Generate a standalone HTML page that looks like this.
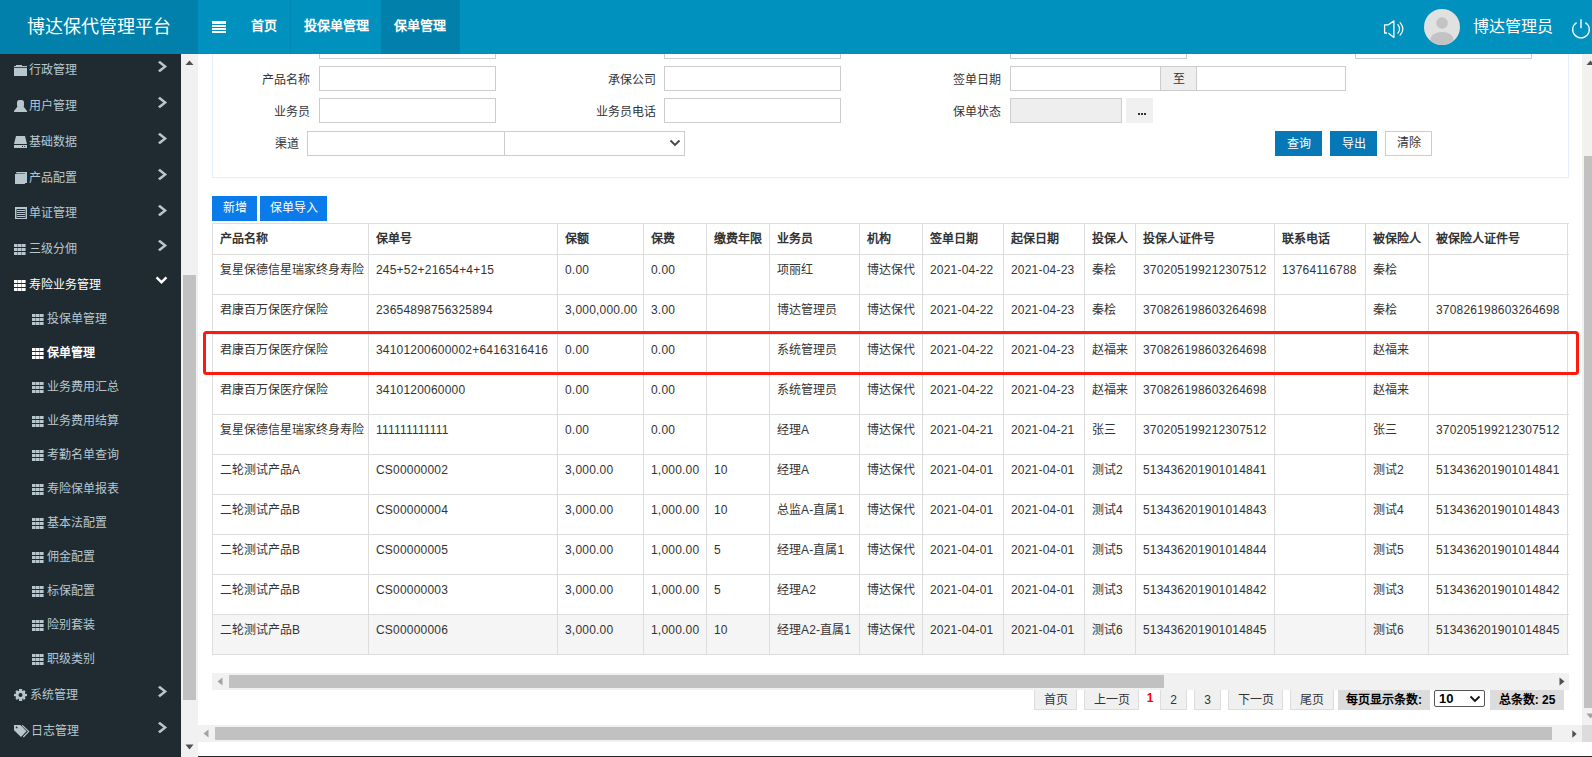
<!DOCTYPE html>
<html lang="zh-CN">
<head>
<meta charset="utf-8">
<style>
*{box-sizing:border-box;margin:0;padding:0}
html,body{width:1592px;height:757px;overflow:hidden;background:#fff}
body{position:relative;font-family:"Liberation Sans",sans-serif;font-size:12px;color:#333}
.a{position:absolute}
/* header */
#hdr{left:0;top:0;width:1592px;height:54px;background:#0091bf}
#logo{left:0;top:0;width:198px;height:54px;background:#0080aa;color:#fff;font-size:18px;line-height:54px;padding-left:27px;white-space:nowrap}
.nav{top:0;height:54px;line-height:52px;color:#fff;font-weight:bold;font-size:13px;white-space:nowrap}
#sb{left:0;top:54px;width:181px;height:703px;background:#1f2b31}
.mi{left:0;height:20px;line-height:20px;color:#b8c7ce;font-size:12px;white-space:nowrap}
.vsb{background:#f1f1f1}
.thumb{background:#c1c1c1}
.lab{text-align:right;height:20px;line-height:20px;color:#333;white-space:nowrap}
.btn{text-align:center;white-space:nowrap;font-size:12px}
.hl{left:212px;width:1357px;height:1px;background:#ddd}
.vl{top:223px;width:1px;height:431px;background:#ddd}
.th{font-weight:bold;height:20px;line-height:20px;white-space:nowrap;color:#333}
.n{letter-spacing:0.2px}
.td{height:20px;line-height:20px;white-space:nowrap;color:#333}
.pg{top:690px;height:20px;line-height:21px;background:#f0f0f0;border:1px solid #ddd;border-top:none;text-align:center;color:#333;white-space:nowrap}
.pgb{top:690px;height:20px;line-height:20px;background:#dcdcdc;text-align:center;color:#000;font-weight:bold;white-space:nowrap}
</style>
</head>
<body>
<!-- main -->
<div class="a" style="left:212px;top:20px;width:1357px;height:158px;border:1px solid #e3f0fc;border-top:none"></div>
<div class="a" style="left:319px;top:34px;width:177px;height:25px;border:1px solid #ccc;background:#fff"></div>
<div class="a" style="left:664px;top:34px;width:177px;height:25px;border:1px solid #ccc;background:#fff"></div>
<div class="a" style="left:1010px;top:34px;width:177px;height:25px;border:1px solid #ccc;background:#fff"></div>
<div class="a" style="left:1355px;top:34px;width:177px;height:25px;border:1px solid #ccc;background:#fff"></div>
<div class="a lab" style="left:110px;top:69.5px;width:200px">产品名称</div>
<div class="a" style="left:319px;top:66px;width:177px;height:25px;border:1px solid #ccc;background:#fff"></div>
<div class="a lab" style="left:456px;top:69.5px;width:200px">承保公司</div>
<div class="a" style="left:664px;top:66px;width:177px;height:25px;border:1px solid #ccc;background:#fff"></div>
<div class="a lab" style="left:801px;top:69.5px;width:200px">签单日期</div>
<div class="a" style="left:1010px;top:66px;width:151px;height:25px;border:1px solid #ccc;background:#fff"></div>
<div class="a" style="left:1160px;top:66px;width:37px;height:25px;border:1px solid #ccc;background:#eee;text-align:center;line-height:25px;color:#333">至</div>
<div class="a" style="left:1196px;top:66px;width:150px;height:25px;border:1px solid #ccc;background:#fff"></div>
<div class="a lab" style="left:110px;top:101.5px;width:200px">业务员</div>
<div class="a" style="left:319px;top:98px;width:177px;height:25px;border:1px solid #ccc;background:#fff"></div>
<div class="a lab" style="left:456px;top:101.5px;width:200px">业务员电话</div>
<div class="a" style="left:664px;top:98px;width:177px;height:25px;border:1px solid #ccc;background:#fff"></div>
<div class="a lab" style="left:801px;top:101.5px;width:200px">保单状态</div>
<div class="a" style="left:1010px;top:98px;width:112px;height:25px;border:1px solid #ccc;background:#eee"></div>
<div class="a" style="left:1126px;top:98px;width:27px;height:25px;background:#f0f0f0"></div><div class="a" style="left:1138px;top:113px;width:1.6px;height:1.8px;background:#333"></div><div class="a" style="left:1141px;top:113px;width:1.6px;height:1.8px;background:#333"></div><div class="a" style="left:1144px;top:113px;width:1.6px;height:1.8px;background:#333"></div>
<div class="a lab" style="left:99px;top:134px;width:200px">渠道</div>
<div class="a" style="left:307px;top:131px;width:198px;height:25px;border:1px solid #ccc;background:#fff"></div>
<div class="a" style="left:504px;top:131px;width:181px;height:25px;border:1px solid #ccc;background:#fff"></div>
<svg class="a" style="left:669px;top:139px" width="12" height="8" viewBox="0 0 12 8"><path d="M1.5 1.5 L6 6 L10.5 1.5" fill="none" stroke="#444" stroke-width="1.8"/></svg>
<div class="a btn" style="left:1275px;top:131px;width:47px;height:25px;line-height:26px;background:#0678b5;color:#fff;">查询</div>
<div class="a btn" style="left:1330px;top:131px;width:47px;height:25px;line-height:26px;background:#0678b5;color:#fff;">导出</div>
<div class="a btn" style="left:1385px;top:131px;width:47px;height:25px;line-height:23px;background:#fff;color:#333;border:1px solid #ccc;">清除</div>
<div class="a btn" style="left:212px;top:196px;width:45px;height:25px;line-height:25px;background:#0a7be8;color:#fff;">新增</div>
<div class="a btn" style="left:260px;top:196px;width:67px;height:25px;line-height:25px;background:#0a7be8;color:#fff;">保单导入</div>
<div class="a" style="left:212px;top:614px;width:1356px;height:40px;background:#f5f5f5"></div>
<div class="a hl" style="top:223px"></div>
<div class="a hl" style="top:254px"></div>
<div class="a hl" style="top:294px"></div>
<div class="a hl" style="top:334px"></div>
<div class="a hl" style="top:374px"></div>
<div class="a hl" style="top:414px"></div>
<div class="a hl" style="top:454px"></div>
<div class="a hl" style="top:494px"></div>
<div class="a hl" style="top:534px"></div>
<div class="a hl" style="top:574px"></div>
<div class="a hl" style="top:614px"></div>
<div class="a hl" style="top:654px"></div>
<div class="a vl" style="left:212px"></div>
<div class="a vl" style="left:368px"></div>
<div class="a vl" style="left:557px"></div>
<div class="a vl" style="left:643px"></div>
<div class="a vl" style="left:706px"></div>
<div class="a vl" style="left:769px"></div>
<div class="a vl" style="left:859px"></div>
<div class="a vl" style="left:922px"></div>
<div class="a vl" style="left:1003px"></div>
<div class="a vl" style="left:1084px"></div>
<div class="a vl" style="left:1135px"></div>
<div class="a vl" style="left:1274px"></div>
<div class="a vl" style="left:1365px"></div>
<div class="a vl" style="left:1428px"></div>
<div class="a vl" style="left:1567px"></div>
<div class="a th" style="left:220px;top:228.5px">产品名称</div>
<div class="a th" style="left:376px;top:228.5px">保单号</div>
<div class="a th" style="left:565px;top:228.5px">保额</div>
<div class="a th" style="left:651px;top:228.5px">保费</div>
<div class="a th" style="left:714px;top:228.5px">缴费年限</div>
<div class="a th" style="left:777px;top:228.5px">业务员</div>
<div class="a th" style="left:867px;top:228.5px">机构</div>
<div class="a th" style="left:930px;top:228.5px">签单日期</div>
<div class="a th" style="left:1011px;top:228.5px">起保日期</div>
<div class="a th" style="left:1092px;top:228.5px">投保人</div>
<div class="a th" style="left:1143px;top:228.5px">投保人证件号</div>
<div class="a th" style="left:1282px;top:228.5px">联系电话</div>
<div class="a th" style="left:1373px;top:228.5px">被保险人</div>
<div class="a th" style="left:1436px;top:228.5px">被保险人证件号</div>
<div class="a td" style="left:220px;top:259.5px">复星保德信星瑞家终身寿险</div>
<div class="a td" style="left:376px;top:259.5px"><span class="n">245+52+21654+4+15</span></div>
<div class="a td" style="left:565px;top:259.5px"><span class="n">0.00</span></div>
<div class="a td" style="left:651px;top:259.5px"><span class="n">0.00</span></div>
<div class="a td" style="left:777px;top:259.5px">项丽红</div>
<div class="a td" style="left:867px;top:259.5px">博达保代</div>
<div class="a td" style="left:930px;top:259.5px"><span class="n">2021-04-22</span></div>
<div class="a td" style="left:1011px;top:259.5px"><span class="n">2021-04-23</span></div>
<div class="a td" style="left:1092px;top:259.5px">秦桧</div>
<div class="a td" style="left:1143px;top:259.5px"><span class="n">370205199212307512</span></div>
<div class="a td" style="left:1282px;top:259.5px"><span class="n">13764116788</span></div>
<div class="a td" style="left:1373px;top:259.5px">秦桧</div>
<div class="a td" style="left:220px;top:299.5px">君康百万保医疗保险</div>
<div class="a td" style="left:376px;top:299.5px"><span class="n">23654898756325894</span></div>
<div class="a td" style="left:565px;top:299.5px"><span class="n">3,000,000.00</span></div>
<div class="a td" style="left:651px;top:299.5px"><span class="n">3.00</span></div>
<div class="a td" style="left:777px;top:299.5px">博达管理员</div>
<div class="a td" style="left:867px;top:299.5px">博达保代</div>
<div class="a td" style="left:930px;top:299.5px"><span class="n">2021-04-22</span></div>
<div class="a td" style="left:1011px;top:299.5px"><span class="n">2021-04-23</span></div>
<div class="a td" style="left:1092px;top:299.5px">秦桧</div>
<div class="a td" style="left:1143px;top:299.5px"><span class="n">370826198603264698</span></div>
<div class="a td" style="left:1373px;top:299.5px">秦桧</div>
<div class="a td" style="left:1436px;top:299.5px"><span class="n">370826198603264698</span></div>
<div class="a td" style="left:220px;top:339.5px">君康百万保医疗保险</div>
<div class="a td" style="left:376px;top:339.5px"><span class="n">34101200600002+6416316416</span></div>
<div class="a td" style="left:565px;top:339.5px"><span class="n">0.00</span></div>
<div class="a td" style="left:651px;top:339.5px"><span class="n">0.00</span></div>
<div class="a td" style="left:777px;top:339.5px">系统管理员</div>
<div class="a td" style="left:867px;top:339.5px">博达保代</div>
<div class="a td" style="left:930px;top:339.5px"><span class="n">2021-04-22</span></div>
<div class="a td" style="left:1011px;top:339.5px"><span class="n">2021-04-23</span></div>
<div class="a td" style="left:1092px;top:339.5px">赵福来</div>
<div class="a td" style="left:1143px;top:339.5px"><span class="n">370826198603264698</span></div>
<div class="a td" style="left:1373px;top:339.5px">赵福来</div>
<div class="a td" style="left:220px;top:379.5px">君康百万保医疗保险</div>
<div class="a td" style="left:376px;top:379.5px"><span class="n">3410120060000</span></div>
<div class="a td" style="left:565px;top:379.5px"><span class="n">0.00</span></div>
<div class="a td" style="left:651px;top:379.5px"><span class="n">0.00</span></div>
<div class="a td" style="left:777px;top:379.5px">系统管理员</div>
<div class="a td" style="left:867px;top:379.5px">博达保代</div>
<div class="a td" style="left:930px;top:379.5px"><span class="n">2021-04-22</span></div>
<div class="a td" style="left:1011px;top:379.5px"><span class="n">2021-04-23</span></div>
<div class="a td" style="left:1092px;top:379.5px">赵福来</div>
<div class="a td" style="left:1143px;top:379.5px"><span class="n">370826198603264698</span></div>
<div class="a td" style="left:1373px;top:379.5px">赵福来</div>
<div class="a td" style="left:220px;top:419.5px">复星保德信星瑞家终身寿险</div>
<div class="a td" style="left:376px;top:419.5px"><span class="n">111111111111</span></div>
<div class="a td" style="left:565px;top:419.5px"><span class="n">0.00</span></div>
<div class="a td" style="left:651px;top:419.5px"><span class="n">0.00</span></div>
<div class="a td" style="left:777px;top:419.5px">经理<span class="n">A</span></div>
<div class="a td" style="left:867px;top:419.5px">博达保代</div>
<div class="a td" style="left:930px;top:419.5px"><span class="n">2021-04-21</span></div>
<div class="a td" style="left:1011px;top:419.5px"><span class="n">2021-04-21</span></div>
<div class="a td" style="left:1092px;top:419.5px">张三</div>
<div class="a td" style="left:1143px;top:419.5px"><span class="n">370205199212307512</span></div>
<div class="a td" style="left:1373px;top:419.5px">张三</div>
<div class="a td" style="left:1436px;top:419.5px"><span class="n">370205199212307512</span></div>
<div class="a td" style="left:220px;top:459.5px">二轮测试产品<span class="n">A</span></div>
<div class="a td" style="left:376px;top:459.5px"><span class="n">CS00000002</span></div>
<div class="a td" style="left:565px;top:459.5px"><span class="n">3,000.00</span></div>
<div class="a td" style="left:651px;top:459.5px"><span class="n">1,000.00</span></div>
<div class="a td" style="left:714px;top:459.5px"><span class="n">10</span></div>
<div class="a td" style="left:777px;top:459.5px">经理<span class="n">A</span></div>
<div class="a td" style="left:867px;top:459.5px">博达保代</div>
<div class="a td" style="left:930px;top:459.5px"><span class="n">2021-04-01</span></div>
<div class="a td" style="left:1011px;top:459.5px"><span class="n">2021-04-01</span></div>
<div class="a td" style="left:1092px;top:459.5px">测试<span class="n">2</span></div>
<div class="a td" style="left:1143px;top:459.5px"><span class="n">513436201901014841</span></div>
<div class="a td" style="left:1373px;top:459.5px">测试<span class="n">2</span></div>
<div class="a td" style="left:1436px;top:459.5px"><span class="n">513436201901014841</span></div>
<div class="a td" style="left:220px;top:499.5px">二轮测试产品<span class="n">B</span></div>
<div class="a td" style="left:376px;top:499.5px"><span class="n">CS00000004</span></div>
<div class="a td" style="left:565px;top:499.5px"><span class="n">3,000.00</span></div>
<div class="a td" style="left:651px;top:499.5px"><span class="n">1,000.00</span></div>
<div class="a td" style="left:714px;top:499.5px"><span class="n">10</span></div>
<div class="a td" style="left:777px;top:499.5px">总监<span class="n">A-</span>直属<span class="n">1</span></div>
<div class="a td" style="left:867px;top:499.5px">博达保代</div>
<div class="a td" style="left:930px;top:499.5px"><span class="n">2021-04-01</span></div>
<div class="a td" style="left:1011px;top:499.5px"><span class="n">2021-04-01</span></div>
<div class="a td" style="left:1092px;top:499.5px">测试<span class="n">4</span></div>
<div class="a td" style="left:1143px;top:499.5px"><span class="n">513436201901014843</span></div>
<div class="a td" style="left:1373px;top:499.5px">测试<span class="n">4</span></div>
<div class="a td" style="left:1436px;top:499.5px"><span class="n">513436201901014843</span></div>
<div class="a td" style="left:220px;top:539.5px">二轮测试产品<span class="n">B</span></div>
<div class="a td" style="left:376px;top:539.5px"><span class="n">CS00000005</span></div>
<div class="a td" style="left:565px;top:539.5px"><span class="n">3,000.00</span></div>
<div class="a td" style="left:651px;top:539.5px"><span class="n">1,000.00</span></div>
<div class="a td" style="left:714px;top:539.5px"><span class="n">5</span></div>
<div class="a td" style="left:777px;top:539.5px">经理<span class="n">A-</span>直属<span class="n">1</span></div>
<div class="a td" style="left:867px;top:539.5px">博达保代</div>
<div class="a td" style="left:930px;top:539.5px"><span class="n">2021-04-01</span></div>
<div class="a td" style="left:1011px;top:539.5px"><span class="n">2021-04-01</span></div>
<div class="a td" style="left:1092px;top:539.5px">测试<span class="n">5</span></div>
<div class="a td" style="left:1143px;top:539.5px"><span class="n">513436201901014844</span></div>
<div class="a td" style="left:1373px;top:539.5px">测试<span class="n">5</span></div>
<div class="a td" style="left:1436px;top:539.5px"><span class="n">513436201901014844</span></div>
<div class="a td" style="left:220px;top:579.5px">二轮测试产品<span class="n">B</span></div>
<div class="a td" style="left:376px;top:579.5px"><span class="n">CS00000003</span></div>
<div class="a td" style="left:565px;top:579.5px"><span class="n">3,000.00</span></div>
<div class="a td" style="left:651px;top:579.5px"><span class="n">1,000.00</span></div>
<div class="a td" style="left:714px;top:579.5px"><span class="n">5</span></div>
<div class="a td" style="left:777px;top:579.5px">经理<span class="n">A2</span></div>
<div class="a td" style="left:867px;top:579.5px">博达保代</div>
<div class="a td" style="left:930px;top:579.5px"><span class="n">2021-04-01</span></div>
<div class="a td" style="left:1011px;top:579.5px"><span class="n">2021-04-01</span></div>
<div class="a td" style="left:1092px;top:579.5px">测试<span class="n">3</span></div>
<div class="a td" style="left:1143px;top:579.5px"><span class="n">513436201901014842</span></div>
<div class="a td" style="left:1373px;top:579.5px">测试<span class="n">3</span></div>
<div class="a td" style="left:1436px;top:579.5px"><span class="n">513436201901014842</span></div>
<div class="a td" style="left:220px;top:619.5px">二轮测试产品<span class="n">B</span></div>
<div class="a td" style="left:376px;top:619.5px"><span class="n">CS00000006</span></div>
<div class="a td" style="left:565px;top:619.5px"><span class="n">3,000.00</span></div>
<div class="a td" style="left:651px;top:619.5px"><span class="n">1,000.00</span></div>
<div class="a td" style="left:714px;top:619.5px"><span class="n">10</span></div>
<div class="a td" style="left:777px;top:619.5px">经理<span class="n">A2-</span>直属<span class="n">1</span></div>
<div class="a td" style="left:867px;top:619.5px">博达保代</div>
<div class="a td" style="left:930px;top:619.5px"><span class="n">2021-04-01</span></div>
<div class="a td" style="left:1011px;top:619.5px"><span class="n">2021-04-01</span></div>
<div class="a td" style="left:1092px;top:619.5px">测试<span class="n">6</span></div>
<div class="a td" style="left:1143px;top:619.5px"><span class="n">513436201901014845</span></div>
<div class="a td" style="left:1373px;top:619.5px">测试<span class="n">6</span></div>
<div class="a td" style="left:1436px;top:619.5px"><span class="n">513436201901014845</span></div>
<div class="a" style="left:203px;top:331px;width:1376px;height:44px;border:3px solid #ff1a0f;border-radius:3.5px"></div>
<div class="a vsb" style="left:212px;top:673px;width:1357px;height:17px"></div>
<div class="a thumb" style="left:229px;top:675px;width:935px;height:13px"></div>
<svg class="a" style="left:217px;top:677px" width="6" height="9" viewBox="0 0 6 9"><path d="M5.5 0.5 L0.5 4.5 L5.5 8.5 Z" fill="#a3a3a3"/></svg>
<svg class="a" style="left:1559px;top:677px" width="6" height="9" viewBox="0 0 6 9"><path d="M0.5 0.5 L5.5 4.5 L0.5 8.5 Z" fill="#505050"/></svg>
<div class="a pg" style="left:1034px;width:43px;">首页</div>
<div class="a pg" style="left:1084px;width:55px;">上一页</div>
<div class="a" style="left:1144px;top:688.5px;width:12px;height:19px;line-height:19px;text-align:center;color:#f00;font-weight:bold;font-size:12px">1</div>
<div class="a pg" style="left:1160px;width:27px;">2</div>
<div class="a pg" style="left:1194px;width:27px;">3</div>
<div class="a pg" style="left:1228px;width:55px;">下一页</div>
<div class="a pg" style="left:1290px;width:44px;">尾页</div>
<div class="a pgb" style="left:1338px;width:92px">每页显示条数:</div>
<div class="a" style="left:1434px;top:690px;width:51px;height:17px;border:1px solid #555;border-radius:2px;background:#fff;line-height:15px;padding-left:4px;font-size:13px;color:#000;font-weight:bold">10</div>
<svg class="a" style="left:1469px;top:695px" width="12" height="8" viewBox="0 0 12 8"><path d="M1.5 1.5 L6 6 L10.5 1.5" fill="none" stroke="#111" stroke-width="1.8"/></svg>
<div class="a pgb" style="left:1490px;width:74px">总条数: 25</div>
<div class="a vsb" style="left:1582px;top:54px;width:17px;height:671px"></div>
<div class="a thumb" style="left:1584px;top:156px;width:13px;height:552px"></div>
<svg class="a" style="left:1586px;top:60px" width="9" height="6" viewBox="0 0 9 6"><path d="M0.5 5 L4.5 0.6 L8.5 5 Z" fill="#505050"/></svg>
<svg class="a" style="left:1586px;top:713px" width="9" height="6" viewBox="0 0 9 6"><path d="M0.5 0.5 L4.5 5.5 L8.5 0.5 Z" fill="#a3a3a3"/></svg>
<div class="a vsb" style="left:198px;top:725px;width:1384px;height:17px"></div>
<div class="a thumb" style="left:215px;top:727px;width:1337px;height:13px"></div>
<svg class="a" style="left:203px;top:729px" width="6" height="9" viewBox="0 0 6 9"><path d="M5.5 0.5 L0.5 4.5 L5.5 8.5 Z" fill="#a3a3a3"/></svg>
<svg class="a" style="left:1571.5px;top:729.5px" width="6" height="9" viewBox="0 0 6 9"><path d="M0.3 0.3 L4.7 4 L0.3 7.7 Z" fill="#505050"/></svg>
<div class="a" style="left:1582px;top:725px;width:10px;height:17px;background:#dcdcdc"></div>
<div class="a" style="left:0;top:756px;width:1592px;height:1px;background:#222"></div>

<div id="hdr" class="a"></div>
<div id="logo" class="a">博达保代管理平台</div>
<div class="a" style="left:290px;top:0;width:1px;height:54px;background:#0087b3"></div>
<div class="a" style="left:381px;top:0;width:79px;height:54px;background:#0080aa"></div>
<!-- hamburger -->
<div class="a" style="left:211.5px;top:21px;width:14px;height:2.5px;background:#fff"></div>
<div class="a" style="left:211.5px;top:24.5px;width:14px;height:2.5px;background:#fff"></div>
<div class="a" style="left:211.5px;top:28px;width:14px;height:2.3px;background:#fff"></div>
<div class="a" style="left:211.5px;top:31px;width:14px;height:2.3px;background:#fff"></div>
<div class="a nav" style="left:251px">首页</div>
<div class="a nav" style="left:304px">投保单管理</div>
<div class="a nav" style="left:394px">保单管理</div>

<div id="sb" class="a"></div>
<div class="a vsb" style="left:181px;top:54px;width:17px;height:703px"></div>
<div class="a thumb" style="left:183px;top:275px;width:13px;height:425px"></div>

<!-- sidebar menu -->
<svg class="a" style="left:14px;top:65px" width="13" height="11" viewBox="0 0 13 11"><rect x="2" y="0" width="6" height="1" fill="#b8c7ce"/><rect x="0" y="1" width="13" height="1.2" fill="#b8c7ce"/><rect x="0" y="3" width="13" height="8" fill="#b8c7ce"/></svg>
<div class="a mi" style="left:29px;top:59.5px">行政管理</div>
<svg class="a" style="left:158px;top:60.0px" width="10" height="13" viewBox="0 0 10 13"><path d="M0 2.4 L1.9 0.7 L9.1 6.5 L1.9 12.3 L0 10.6 L5.2 6.5 Z" fill="#b8c7ce"/></svg>
<svg class="a" style="left:14px;top:100px" width="13" height="12" viewBox="0 0 13 12"><rect x="3" y="0" width="7" height="7.5" rx="2.5" fill="#b8c7ce"/><path d="M3.5 6.5 L9.5 6.5 L13 11 L13 12 L0 12 L0 11 Z" fill="#b8c7ce"/></svg>
<div class="a mi" style="left:29px;top:95.5px">用户管理</div>
<svg class="a" style="left:158px;top:96.0px" width="10" height="13" viewBox="0 0 10 13"><path d="M0 2.4 L1.9 0.7 L9.1 6.5 L1.9 12.3 L0 10.6 L5.2 6.5 Z" fill="#b8c7ce"/></svg>
<svg class="a" style="left:14px;top:136px" width="13" height="12" viewBox="0 0 13 12"><path d="M2 0 L11 0 L13 8 L0 8 Z" fill="#b8c7ce"/><rect x="0" y="9" width="13" height="3" fill="#b8c7ce"/><rect x="8" y="10" width="1" height="1" fill="#1f2b31"/><rect x="10.2" y="10" width="1" height="1" fill="#1f2b31"/></svg>
<div class="a mi" style="left:29px;top:131.5px">基础数据</div>
<svg class="a" style="left:158px;top:132.0px" width="10" height="13" viewBox="0 0 10 13"><path d="M0 2.4 L1.9 0.7 L9.1 6.5 L1.9 12.3 L0 10.6 L5.2 6.5 Z" fill="#b8c7ce"/></svg>
<svg class="a" style="left:15px;top:172px" width="12" height="12" viewBox="0 0 12 12"><path d="M1 0 L12 0 L12 11 L10 11 L10 1.5 L1.5 1.5 Z" fill="#b8c7ce"/><rect x="0" y="2" width="10" height="10" fill="#b8c7ce"/></svg>
<div class="a mi" style="left:29px;top:167.5px">产品配置</div>
<svg class="a" style="left:158px;top:168.0px" width="10" height="13" viewBox="0 0 10 13"><path d="M0 2.4 L1.9 0.7 L9.1 6.5 L1.9 12.3 L0 10.6 L5.2 6.5 Z" fill="#b8c7ce"/></svg>
<svg class="a" style="left:15px;top:207px" width="12" height="12" viewBox="0 0 12 12"><path d="M0 0 H12 V12 H0 Z M1.5 2 V11 H10.5 V2 Z" fill="#b8c7ce" fill-rule="evenodd"/><rect x="2" y="3" width="8" height="1" fill="#b8c7ce"/><rect x="2" y="5" width="8" height="1" fill="#b8c7ce"/><rect x="2" y="7" width="8" height="1" fill="#b8c7ce"/><rect x="2" y="9" width="8" height="1" fill="#b8c7ce"/></svg>
<div class="a mi" style="left:29px;top:203px">单证管理</div>
<svg class="a" style="left:158px;top:203.5px" width="10" height="13" viewBox="0 0 10 13"><path d="M0 2.4 L1.9 0.7 L9.1 6.5 L1.9 12.3 L0 10.6 L5.2 6.5 Z" fill="#b8c7ce"/></svg>
<svg class="a" style="left:14px;top:244.0px" width="12" height="11" viewBox="0 0 12 11"><rect x="0" y="0" width="3.6" height="3" fill="#b8c7ce"/><rect x="4" y="0" width="3.6" height="3" fill="#b8c7ce"/><rect x="8" y="0" width="3.6" height="3" fill="#b8c7ce"/><rect x="0" y="4" width="3.6" height="3" fill="#b8c7ce"/><rect x="4" y="4" width="3.6" height="3" fill="#b8c7ce"/><rect x="8" y="4" width="3.6" height="3" fill="#b8c7ce"/><rect x="0" y="8" width="3.6" height="3" fill="#b8c7ce"/><rect x="4" y="8" width="3.6" height="3" fill="#b8c7ce"/><rect x="8" y="8" width="3.6" height="3" fill="#b8c7ce"/></svg>
<div class="a mi" style="left:29px;top:238.5px">三级分佣</div>
<svg class="a" style="left:158px;top:239.0px" width="10" height="13" viewBox="0 0 10 13"><path d="M0 2.4 L1.9 0.7 L9.1 6.5 L1.9 12.3 L0 10.6 L5.2 6.5 Z" fill="#b8c7ce"/></svg>
<svg class="a" style="left:14px;top:280.0px" width="12" height="11" viewBox="0 0 12 11"><rect x="0" y="0" width="3.6" height="3" fill="#fff"/><rect x="4" y="0" width="3.6" height="3" fill="#fff"/><rect x="8" y="0" width="3.6" height="3" fill="#fff"/><rect x="0" y="4" width="3.6" height="3" fill="#fff"/><rect x="4" y="4" width="3.6" height="3" fill="#fff"/><rect x="8" y="4" width="3.6" height="3" fill="#fff"/><rect x="0" y="8" width="3.6" height="3" fill="#fff"/><rect x="4" y="8" width="3.6" height="3" fill="#fff"/><rect x="8" y="8" width="3.6" height="3" fill="#fff"/></svg>
<div class="a mi" style="left:29px;top:274.5px;color:#fff">寿险业务管理</div>
<svg class="a" style="left:155px;top:275.5px" width="13" height="9" viewBox="0 0 13 9"><path d="M0.7 2.3 L2.4 0.6 L6.5 4.6 L10.6 0.6 L12.3 2.3 L6.5 8.1 Z" fill="#fff"/></svg>
<svg class="a" style="left:32px;top:314.0px" width="12" height="11" viewBox="0 0 12 11"><rect x="0" y="0" width="3.6" height="3" fill="#b8c7ce"/><rect x="4" y="0" width="3.6" height="3" fill="#b8c7ce"/><rect x="8" y="0" width="3.6" height="3" fill="#b8c7ce"/><rect x="0" y="4" width="3.6" height="3" fill="#b8c7ce"/><rect x="4" y="4" width="3.6" height="3" fill="#b8c7ce"/><rect x="8" y="4" width="3.6" height="3" fill="#b8c7ce"/><rect x="0" y="8" width="3.6" height="3" fill="#b8c7ce"/><rect x="4" y="8" width="3.6" height="3" fill="#b8c7ce"/><rect x="8" y="8" width="3.6" height="3" fill="#b8c7ce"/></svg>
<div class="a mi" style="left:47px;top:308.5px;color:#b8c7ce">投保单管理</div>
<svg class="a" style="left:32px;top:348.0px" width="12" height="11" viewBox="0 0 12 11"><rect x="0" y="0" width="3.6" height="3" fill="#fff"/><rect x="4" y="0" width="3.6" height="3" fill="#fff"/><rect x="8" y="0" width="3.6" height="3" fill="#fff"/><rect x="0" y="4" width="3.6" height="3" fill="#fff"/><rect x="4" y="4" width="3.6" height="3" fill="#fff"/><rect x="8" y="4" width="3.6" height="3" fill="#fff"/><rect x="0" y="8" width="3.6" height="3" fill="#fff"/><rect x="4" y="8" width="3.6" height="3" fill="#fff"/><rect x="8" y="8" width="3.6" height="3" fill="#fff"/></svg>
<div class="a mi" style="left:47px;top:342.5px;color:#fff;font-weight:bold">保单管理</div>
<svg class="a" style="left:32px;top:382.0px" width="12" height="11" viewBox="0 0 12 11"><rect x="0" y="0" width="3.6" height="3" fill="#b8c7ce"/><rect x="4" y="0" width="3.6" height="3" fill="#b8c7ce"/><rect x="8" y="0" width="3.6" height="3" fill="#b8c7ce"/><rect x="0" y="4" width="3.6" height="3" fill="#b8c7ce"/><rect x="4" y="4" width="3.6" height="3" fill="#b8c7ce"/><rect x="8" y="4" width="3.6" height="3" fill="#b8c7ce"/><rect x="0" y="8" width="3.6" height="3" fill="#b8c7ce"/><rect x="4" y="8" width="3.6" height="3" fill="#b8c7ce"/><rect x="8" y="8" width="3.6" height="3" fill="#b8c7ce"/></svg>
<div class="a mi" style="left:47px;top:376.5px;color:#b8c7ce">业务费用汇总</div>
<svg class="a" style="left:32px;top:416.0px" width="12" height="11" viewBox="0 0 12 11"><rect x="0" y="0" width="3.6" height="3" fill="#b8c7ce"/><rect x="4" y="0" width="3.6" height="3" fill="#b8c7ce"/><rect x="8" y="0" width="3.6" height="3" fill="#b8c7ce"/><rect x="0" y="4" width="3.6" height="3" fill="#b8c7ce"/><rect x="4" y="4" width="3.6" height="3" fill="#b8c7ce"/><rect x="8" y="4" width="3.6" height="3" fill="#b8c7ce"/><rect x="0" y="8" width="3.6" height="3" fill="#b8c7ce"/><rect x="4" y="8" width="3.6" height="3" fill="#b8c7ce"/><rect x="8" y="8" width="3.6" height="3" fill="#b8c7ce"/></svg>
<div class="a mi" style="left:47px;top:410.5px;color:#b8c7ce">业务费用结算</div>
<svg class="a" style="left:32px;top:450.0px" width="12" height="11" viewBox="0 0 12 11"><rect x="0" y="0" width="3.6" height="3" fill="#b8c7ce"/><rect x="4" y="0" width="3.6" height="3" fill="#b8c7ce"/><rect x="8" y="0" width="3.6" height="3" fill="#b8c7ce"/><rect x="0" y="4" width="3.6" height="3" fill="#b8c7ce"/><rect x="4" y="4" width="3.6" height="3" fill="#b8c7ce"/><rect x="8" y="4" width="3.6" height="3" fill="#b8c7ce"/><rect x="0" y="8" width="3.6" height="3" fill="#b8c7ce"/><rect x="4" y="8" width="3.6" height="3" fill="#b8c7ce"/><rect x="8" y="8" width="3.6" height="3" fill="#b8c7ce"/></svg>
<div class="a mi" style="left:47px;top:444.5px;color:#b8c7ce">考勤名单查询</div>
<svg class="a" style="left:32px;top:484.0px" width="12" height="11" viewBox="0 0 12 11"><rect x="0" y="0" width="3.6" height="3" fill="#b8c7ce"/><rect x="4" y="0" width="3.6" height="3" fill="#b8c7ce"/><rect x="8" y="0" width="3.6" height="3" fill="#b8c7ce"/><rect x="0" y="4" width="3.6" height="3" fill="#b8c7ce"/><rect x="4" y="4" width="3.6" height="3" fill="#b8c7ce"/><rect x="8" y="4" width="3.6" height="3" fill="#b8c7ce"/><rect x="0" y="8" width="3.6" height="3" fill="#b8c7ce"/><rect x="4" y="8" width="3.6" height="3" fill="#b8c7ce"/><rect x="8" y="8" width="3.6" height="3" fill="#b8c7ce"/></svg>
<div class="a mi" style="left:47px;top:478.5px;color:#b8c7ce">寿险保单报表</div>
<svg class="a" style="left:32px;top:518.0px" width="12" height="11" viewBox="0 0 12 11"><rect x="0" y="0" width="3.6" height="3" fill="#b8c7ce"/><rect x="4" y="0" width="3.6" height="3" fill="#b8c7ce"/><rect x="8" y="0" width="3.6" height="3" fill="#b8c7ce"/><rect x="0" y="4" width="3.6" height="3" fill="#b8c7ce"/><rect x="4" y="4" width="3.6" height="3" fill="#b8c7ce"/><rect x="8" y="4" width="3.6" height="3" fill="#b8c7ce"/><rect x="0" y="8" width="3.6" height="3" fill="#b8c7ce"/><rect x="4" y="8" width="3.6" height="3" fill="#b8c7ce"/><rect x="8" y="8" width="3.6" height="3" fill="#b8c7ce"/></svg>
<div class="a mi" style="left:47px;top:512.5px;color:#b8c7ce">基本法配置</div>
<svg class="a" style="left:32px;top:552.0px" width="12" height="11" viewBox="0 0 12 11"><rect x="0" y="0" width="3.6" height="3" fill="#b8c7ce"/><rect x="4" y="0" width="3.6" height="3" fill="#b8c7ce"/><rect x="8" y="0" width="3.6" height="3" fill="#b8c7ce"/><rect x="0" y="4" width="3.6" height="3" fill="#b8c7ce"/><rect x="4" y="4" width="3.6" height="3" fill="#b8c7ce"/><rect x="8" y="4" width="3.6" height="3" fill="#b8c7ce"/><rect x="0" y="8" width="3.6" height="3" fill="#b8c7ce"/><rect x="4" y="8" width="3.6" height="3" fill="#b8c7ce"/><rect x="8" y="8" width="3.6" height="3" fill="#b8c7ce"/></svg>
<div class="a mi" style="left:47px;top:546.5px;color:#b8c7ce">佣金配置</div>
<svg class="a" style="left:32px;top:586.0px" width="12" height="11" viewBox="0 0 12 11"><rect x="0" y="0" width="3.6" height="3" fill="#b8c7ce"/><rect x="4" y="0" width="3.6" height="3" fill="#b8c7ce"/><rect x="8" y="0" width="3.6" height="3" fill="#b8c7ce"/><rect x="0" y="4" width="3.6" height="3" fill="#b8c7ce"/><rect x="4" y="4" width="3.6" height="3" fill="#b8c7ce"/><rect x="8" y="4" width="3.6" height="3" fill="#b8c7ce"/><rect x="0" y="8" width="3.6" height="3" fill="#b8c7ce"/><rect x="4" y="8" width="3.6" height="3" fill="#b8c7ce"/><rect x="8" y="8" width="3.6" height="3" fill="#b8c7ce"/></svg>
<div class="a mi" style="left:47px;top:580.5px;color:#b8c7ce">标保配置</div>
<svg class="a" style="left:32px;top:620.0px" width="12" height="11" viewBox="0 0 12 11"><rect x="0" y="0" width="3.6" height="3" fill="#b8c7ce"/><rect x="4" y="0" width="3.6" height="3" fill="#b8c7ce"/><rect x="8" y="0" width="3.6" height="3" fill="#b8c7ce"/><rect x="0" y="4" width="3.6" height="3" fill="#b8c7ce"/><rect x="4" y="4" width="3.6" height="3" fill="#b8c7ce"/><rect x="8" y="4" width="3.6" height="3" fill="#b8c7ce"/><rect x="0" y="8" width="3.6" height="3" fill="#b8c7ce"/><rect x="4" y="8" width="3.6" height="3" fill="#b8c7ce"/><rect x="8" y="8" width="3.6" height="3" fill="#b8c7ce"/></svg>
<div class="a mi" style="left:47px;top:614.5px;color:#b8c7ce">险别套装</div>
<svg class="a" style="left:32px;top:654.0px" width="12" height="11" viewBox="0 0 12 11"><rect x="0" y="0" width="3.6" height="3" fill="#b8c7ce"/><rect x="4" y="0" width="3.6" height="3" fill="#b8c7ce"/><rect x="8" y="0" width="3.6" height="3" fill="#b8c7ce"/><rect x="0" y="4" width="3.6" height="3" fill="#b8c7ce"/><rect x="4" y="4" width="3.6" height="3" fill="#b8c7ce"/><rect x="8" y="4" width="3.6" height="3" fill="#b8c7ce"/><rect x="0" y="8" width="3.6" height="3" fill="#b8c7ce"/><rect x="4" y="8" width="3.6" height="3" fill="#b8c7ce"/><rect x="8" y="8" width="3.6" height="3" fill="#b8c7ce"/></svg>
<div class="a mi" style="left:47px;top:648.5px;color:#b8c7ce">职级类别</div>
<svg class="a" style="left:14px;top:689px" width="13" height="12" viewBox="0 0 13 12"><g fill="#b8c7ce"><rect x="1.8" y="2" width="9.3" height="7.8"/><rect x="5" y="0" width="3.2" height="12"/><rect x="0" y="4.9" width="13" height="2.3"/><path d="M1.5 2.5 L3 1 L4 2 L2.5 3.5 Z M11.5 2.5 L10 1 L9 2 L10.5 3.5 Z M1.5 9.5 L3 11 L4 10 L2.5 8.5 Z M11.5 9.5 L10 11 L9 10 L10.5 8.5 Z"/></g><circle cx="6.5" cy="6" r="2" fill="#1f2b31"/></svg>
<div class="a mi" style="left:30px;top:684.5px">系统管理</div>
<svg class="a" style="left:158px;top:685.0px" width="10" height="13" viewBox="0 0 10 13"><path d="M0 2.4 L1.9 0.7 L9.1 6.5 L1.9 12.3 L0 10.6 L5.2 6.5 Z" fill="#b8c7ce"/></svg>
<svg class="a" style="left:14px;top:725px" width="16" height="13" viewBox="0 0 16 13"><path d="M0 0 L6.5 0 L12.5 6.3 L7 12 L0 5.3 Z" fill="#b8c7ce"/><circle cx="2.6" cy="2.4" r="0.9" fill="#1f2b31"/><path d="M8.2 0.3 L14.7 6.6 L9.3 12" fill="none" stroke="#b8c7ce" stroke-width="1.1"/></svg>
<div class="a mi" style="left:31px;top:720.5px">日志管理</div>
<svg class="a" style="left:158px;top:721.0px" width="10" height="13" viewBox="0 0 10 13"><path d="M0 2.4 L1.9 0.7 L9.1 6.5 L1.9 12.3 L0 10.6 L5.2 6.5 Z" fill="#b8c7ce"/></svg>
<!-- scrollbar arrows -->
<svg class="a" style="left:185px;top:60px" width="9" height="6" viewBox="0 0 9 6"><path d="M0.5 5 L4.5 0.6 L8.5 5 Z" fill="#505050"/></svg>
<svg class="a" style="left:185px;top:744px" width="9" height="6" viewBox="0 0 9 6"><path d="M0.5 0.5 L4.5 5.5 L8.5 0.5 Z" fill="#505050"/></svg>
<svg class="a" style="left:1378px;top:14px" width="32" height="30" viewBox="0 0 32 30"><path d="M8.6 19 L6.6 19 L6.6 10.8 L10.4 10.8 L15.9 6.9 L15.9 23.4 L10.9 19.4" fill="none" stroke="#fff" stroke-width="1.3" stroke-linecap="round" stroke-linejoin="round"/><path d="M19.9 10.6 Q23.2 15 19.9 19.2" fill="none" stroke="#fff" stroke-width="1.2" stroke-linecap="round"/><path d="M22.1 8.6 Q27.6 15 22.1 21.2" fill="none" stroke="#fff" stroke-width="1.2" stroke-linecap="round"/></svg>
<svg class="a" style="left:1424px;top:9px" width="36" height="36" viewBox="0 0 36 36"><defs><clipPath id="cc"><circle cx="18" cy="18" r="18"/></clipPath></defs><circle cx="18" cy="18" r="18" fill="#e1e1e1"/><g clip-path="url(#cc)" fill="#c3c3c3"><circle cx="18" cy="14" r="5.8"/><ellipse cx="18" cy="31" rx="11.5" ry="8"/></g></svg>
<div class="a" style="left:1473px;top:14px;height:26px;line-height:26px;font-size:16px;color:#fff;white-space:nowrap">博达管理员</div>
<svg class="a" style="left:1566px;top:14px" width="26" height="30" viewBox="0 0 26 30"><path d="M10.6 8.6 A8.3 8.3 0 1 0 19.4 8.6" fill="none" stroke="#fff" stroke-width="1.3"/><path d="M15 5.2 L15 14.2" stroke="#fff" stroke-width="1.4"/></svg>
</body>
</html>
